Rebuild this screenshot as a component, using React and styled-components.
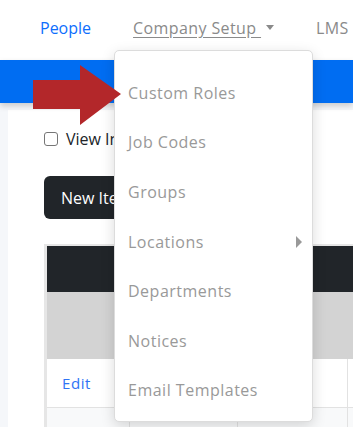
import React from 'react'
import styled, { createGlobalStyle } from 'styled-components'

const GlobalStyle = createGlobalStyle`
  html, body {
    margin: 0;
    padding: 0;
    background: #f5f7fa;
    font-family: "Open Sans", "Liberation Sans", sans-serif;
    overflow: hidden;
  }
`

const menuItems = [
  { label: 'Custom Roles' },
  { label: 'Job Codes' },
  { label: 'Groups' },
  { label: 'Locations', sub: true },
  { label: 'Departments' },
  { label: 'Notices' },
  { label: 'Email Templates' },
]

function App() {
  return (
    <Page>
      <GlobalStyle />
      <TopNav>
        <NavLink active>People</NavLink>
        <NavLink dropdown>
          <Underlined>Company Setup&nbsp;</Underlined>
          <Caret />
        </NavLink>
        <NavLink>LMS</NavLink>
      </TopNav>
      <BlueBar />

      <Content>
        <Card>
          <CheckRow>
            <Checkbox type="checkbox" />
            <span>View Inactive</span>
          </CheckRow>
          <DarkButton>New Item</DarkButton>

          <Table>
            <HeadRow />
            <GrayRow />
            <BodyRow>
              <Cell><EditLink>Edit</EditLink></Cell>
              <Cell />
              <Cell />
              <Cell />
            </BodyRow>
            <BodyRow light>
              <Cell />
              <Cell />
              <Cell />
              <Cell />
            </BodyRow>
          </Table>
        </Card>
      </Content>

      <Menu>
        {menuItems.map((item) => (
          <MenuItem key={item.label}>
            {item.label}
            {item.sub && <SubCaret />}
          </MenuItem>
        ))}
      </Menu>

      <Arrow width="90" height="62" viewBox="0 0 90 62">
        <polygon points="0,15 47,15 47,0 88,29 47,60 47,44 0,44" fill="#b3272a" />
      </Arrow>
    </Page>
  )
}

export default App

const Page = styled.div`
  position: relative;
  width: 353px;
  height: 427px;
  overflow: hidden;
`

const TopNav = styled.nav`
  display: flex;
  align-items: center;
  gap: 42px;
  height: 60px;
  padding: 0 0 5px 40px;
  background: #fff;
  box-sizing: border-box;
`

const NavLink = styled.a`
  display: flex;
  align-items: center;
  font-size: 16px;
  white-space: nowrap;
  letter-spacing: ${(p) => (p.active ? '0' : '0.4px')};
  color: ${(p) => (p.active ? '#0d6efd' : '#8a8a8a')};
  cursor: pointer;
`

const Underlined = styled.span`
  text-decoration: underline;
  text-underline-offset: 3px;
`

const Caret = styled.span`
  display: inline-block;
  margin-left: 5px;
  width: 0;
  height: 0;
  border-left: 4.5px solid transparent;
  border-right: 4.5px solid transparent;
  border-top: 5px solid #8a8a8a;
`

const BlueBar = styled.div`
  height: 43px;
  background: #006df2;
  box-shadow: 0 3px 6px rgba(0, 0, 0, 0.18);
  position: relative;
`

const Content = styled.div`
  padding: 7px 0 0 8px;
`

const Card = styled.div`
  background: #fff;
  padding: 21px 0 0 36px;
  height: 330px;
`

const CheckRow = styled.label`
  display: flex;
  align-items: center;
  gap: 8px;
  font-size: 16px;
  color: #212529;
  white-space: nowrap;
  height: 16px;
`

const Checkbox = styled.input`
  appearance: none;
  margin: 0;
  width: 14px;
  height: 14px;
  border: 1px solid #767676;
  border-radius: 3px;
  box-sizing: border-box;
  background: #fff;
`

const DarkButton = styled.button`
  display: block;
  margin-top: 29px;
  height: 43px;
  padding: 0 17px;
  border: none;
  border-radius: 6px;
  background: #212529;
  color: #fff;
  font-family: inherit;
  font-size: 16px;
  white-space: nowrap;
`

const Table = styled.div`
  margin-top: 25px;
  padding: 2px 0 0 3px;
  background: #e6e6e6;
  width: 400px;
`

const HeadRow = styled.div`
  height: 46px;
  background: #212529;
`

const GrayRow = styled.div`
  height: 67px;
  background: #d3d3d3;
`

const BodyRow = styled.div`
  display: grid;
  grid-template-columns: 83px 108px 110px 1fr;
  height: 48px;
  background: ${(p) => (p.light ? '#f8f9fa' : '#fff')};
  border-bottom: 1px solid #e2e2e2;
`

const Cell = styled.div`
  display: flex;
  align-items: center;
  padding-left: 15px;
  border-right: 1px solid #e2e2e2;
`

const EditLink = styled.a`
  color: #2f74f5;
  font-size: 15px;
  letter-spacing: 0.6px;
`

const Menu = styled.ul`
  position: absolute;
  left: 114px;
  top: 50px;
  width: 199px;
  height: 372px;
  margin: 0;
  padding: 17px 0 0;
  list-style: none;
  background: #fff;
  border: 1px solid #dcdcdc;
  border-radius: 5px;
  box-sizing: border-box;
  box-shadow: 0 4px 14px rgba(0, 0, 0, 0.15);
`

const MenuItem = styled.li`
  display: flex;
  align-items: center;
  justify-content: space-between;
  height: 49.6px;
  padding: 0 10px 0 13px;
  font-size: 16px;
  letter-spacing: 0.5px;
  color: #999;
  white-space: nowrap;
`

const SubCaret = styled.span`
  width: 0;
  height: 0;
  border-top: 6px solid transparent;
  border-bottom: 6px solid transparent;
  border-left: 6px solid #999;
`

const Arrow = styled.svg`
  position: absolute;
  left: 33px;
  top: 65px;
`
